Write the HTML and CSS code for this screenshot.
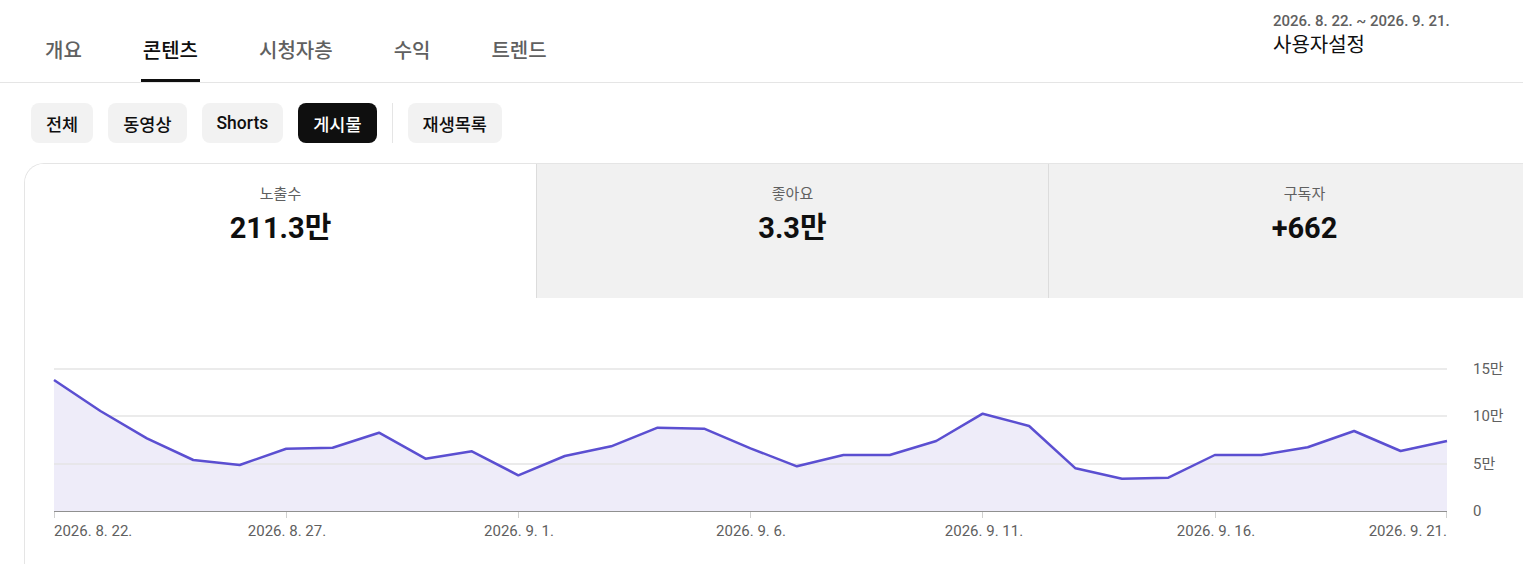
FILE: index.html
```html
<!DOCTYPE html>
<html lang="ko">
<head>
  <meta charset="UTF-8" />
  <title>채널 분석 - 콘텐츠</title>
  <link rel="stylesheet" href="styles.css">
</head>
<body>
  <header class="top-bar">
    <nav class="tabs">
      <a class="tab">개요</a>
      <a class="tab active">콘텐츠</a>
      <a class="tab">시청자층</a>
      <a class="tab">수익</a>
      <a class="tab">트렌드</a>
    </nav>
    <div class="period">
      <div class="period-range">2026. 8. 22. ~ 2026. 9. 21.</div>
      <div class="period-name">사용자설정</div>
    </div>
  </header>

  <div class="chips">
    <button class="chip">전체</button>
    <button class="chip">동영상</button>
    <button class="chip">Shorts</button>
    <button class="chip selected">게시물</button>
    <span class="chip-divider"></span>
    <button class="chip">재생목록</button>
  </div>

  <section class="card">
    <div class="metrics">
      <div class="metric current">
        <div class="metric-label">노출수</div>
        <div class="metric-value">211.3만</div>
      </div>
      <div class="metric">
        <div class="metric-label">좋아요</div>
        <div class="metric-value">3.3만</div>
      </div>
      <div class="metric">
        <div class="metric-label">구독자</div>
        <div class="metric-value">+662</div>
      </div>
    </div>

    <svg class="chart" width="1534" height="266" viewBox="25 298 1534 266">
      <line class="grid" x1="54" y1="369" x2="1447" y2="369" />
      <line class="grid" x1="54" y1="416" x2="1447" y2="416" />
      <polygon class="area" points="54,380 100.4,411 146.9,438.3 193.3,460 239.7,465 286.2,448.7 332.6,447.7 379,432.7 425.5,458.7 471.9,451.3 518.3,475.3 564.8,456 611.2,446.3 657.6,427.7 704.1,428.7 750.5,448.3 796.9,466.3 843.4,455 889.8,455 936.2,441 982.7,413.7 1029.1,426 1075.5,468.3 1122,478.7 1168.4,477.7 1214.8,455 1261.3,455 1307.7,447.3 1354.1,431 1400.6,451 1447,441 1447,511 54,511" />
      <line class="grid" x1="54" y1="464" x2="1447" y2="464" />
      <line class="tick" x1="54.5" y1="511" x2="54.5" y2="518" />
      <line class="tick" x1="286.5" y1="511" x2="286.5" y2="518" />
      <line class="tick" x1="518.5" y1="511" x2="518.5" y2="518" />
      <line class="tick" x1="750.5" y1="511" x2="750.5" y2="518" />
      <line class="tick" x1="982.5" y1="511" x2="982.5" y2="518" />
      <line class="tick" x1="1215.5" y1="511" x2="1215.5" y2="518" />
      <line class="tick" x1="1446.5" y1="511" x2="1446.5" y2="518" />
      <line class="baseline" x1="54" y1="511.5" x2="1447" y2="511.5" />
      <polyline class="series" points="54,380 100.4,411 146.9,438.3 193.3,460 239.7,465 286.2,448.7 332.6,447.7 379,432.7 425.5,458.7 471.9,451.3 518.3,475.3 564.8,456 611.2,446.3 657.6,427.7 704.1,428.7 750.5,448.3 796.9,466.3 843.4,455 889.8,455 936.2,441 982.7,413.7 1029.1,426 1075.5,468.3 1122,478.7 1168.4,477.7 1214.8,455 1261.3,455 1307.7,447.3 1354.1,431 1400.6,451 1447,441" />

      <text class="axis" x="1473" y="374">15만</text>
      <text class="axis" x="1473" y="421">10만</text>
      <text class="axis" x="1473" y="469">5만</text>
      <text class="axis" x="1473" y="516">0</text>

      <text class="axis" x="54" y="536">2026. 8. 22.</text>
      <text class="axis mid" x="287" y="536">2026. 8. 27.</text>
      <text class="axis mid" x="519" y="536">2026. 9. 1.</text>
      <text class="axis mid" x="751" y="536">2026. 9. 6.</text>
      <text class="axis mid" x="984" y="536">2026. 9. 11.</text>
      <text class="axis mid" x="1216" y="536">2026. 9. 16.</text>
      <text class="axis end" x="1447" y="536">2026. 9. 21.</text>
    </svg>
  </section>
</body>
</html>
```

FILE: styles.css
```css
html {
  overflow: hidden;
}
body {
  font-family: Roboto, "Noto Sans CJK KR", sans-serif;
  color: #0f0f0f;
  background-color: white;
  margin: 0;
  width: 1523px;
}
.top-bar {
  display: flex;
  justify-content: space-between;
  align-items: flex-start;
  border-bottom: 1px solid #e5e5e5;
}
.tabs {
  display: flex;
  gap: 57px;
  padding-left: 43px;
}
.tab {
  padding: 39px 2px 16px;
  font-size: 20px;
  line-height: 24px;
  font-weight: 500;
  color: #606060;
  border-bottom: 3px solid transparent;
  cursor: pointer;
}
.tab.active {
  color: #0f0f0f;
  border-bottom-color: #0f0f0f;
}
.period {
  width: 250px;
  padding-top: 12px;
}
.period-range {
  font-size: 15px;
  line-height: 18px;
  font-weight: 500;
  color: #606060;
}
.period-name {
  margin-top: 2px;
  font-size: 20px;
  line-height: 26px;
  color: #0f0f0f;
}
.chips {
  display: flex;
  align-items: center;
  gap: 15px;
  padding: 20px 0 20px 31px;
}
.chip {
  height: 40px;
  padding: 0 15px;
  border: none;
  border-radius: 8px;
  background-color: #f2f2f2;
  color: #0f0f0f;
  font-family: inherit;
  font-size: 17.5px;
  font-weight: 500;
  cursor: pointer;
}
.chip.selected {
  background-color: #0f0f0f;
  color: white;
}
.chip-divider {
  width: 1px;
  height: 40px;
  background-color: #e5e5e5;
}
.card {
  box-sizing: border-box;
  width: 1536px;
  margin-left: 24px;
  border: 1px solid #e5e5e5;
  border-right: none;
  border-bottom: none;
  border-radius: 20px 0 0 0;
  overflow: hidden;
}
.metrics {
  display: grid;
  grid-template-columns: 511px 512px 1fr;
  height: 134px;
}
.metric {
  text-align: center;
  padding-top: 20px;
  background-color: #f1f1f1;
  border-left: 1px solid #dcdcdc;
}
.metric.current {
  background-color: white;
  border-left: none;
}
.metric-label {
  font-size: 15px;
  line-height: 20px;
  color: #606060;
}
.metric-value {
  margin-top: 6px;
  font-size: 29px;
  line-height: 36px;
  font-weight: 700;
  color: #0f0f0f;
}
.chart {
  display: block;
}
.grid {
  stroke: #e5e5e5;
  stroke-width: 1.5;
}
.area {
  fill: #eeecf9;
}
.series {
  fill: none;
  stroke: #5b4fd1;
  stroke-width: 2.5;
  stroke-linejoin: round;
}
.baseline {
  stroke: #909090;
  stroke-width: 1;
}
.tick {
  stroke: #d0d0d0;
  stroke-width: 1;
}
.axis {
  font-family: Roboto, "Noto Sans CJK KR", sans-serif;
  font-size: 15px;
  fill: #606060;
}
.axis.mid {
  text-anchor: middle;
}
.axis.end {
  text-anchor: end;
}
```
